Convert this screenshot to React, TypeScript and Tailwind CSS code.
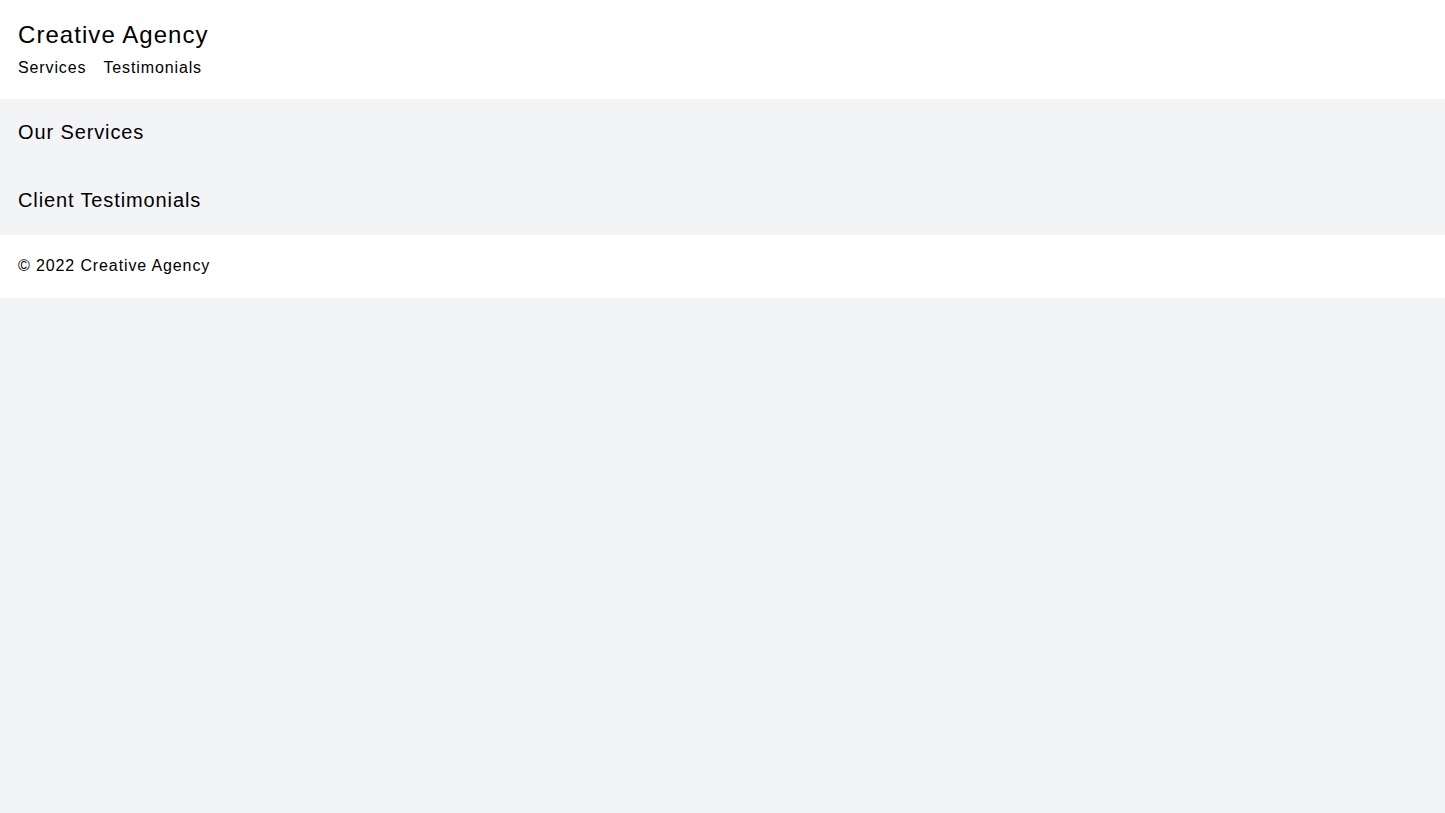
import React from "react";

const NAV_LINKS = ["Services", "Testimonials"];

const App: React.FC = () => {
  return (
    <div
      className="min-h-screen bg-gray-100 text-black tracking-[0.055em]"
      style={{ fontFamily: '"Liberation Sans", Arial, sans-serif' }}
    >
      <header className="bg-white px-[18px] pt-[19px] pb-[19px]">
        <h1 className="text-2xl tracking-[0.044em]">Creative Agency</h1>
        <nav className="mt-[5px] flex gap-[17px]">
          {NAV_LINKS.map((link) => (
            <a key={link} href={`#${link.toLowerCase()}`} className="text-base">
              {link}
            </a>
          ))}
        </nav>
      </header>

      <main>
        <section id="services" className="px-[18px] pt-[19px] pb-[21px]">
          <h2 className="text-xl">Our Services</h2>
        </section>
        <section id="testimonials" className="px-[18px] pt-[19px] pb-[21px]">
          <h2 className="text-xl">Client Testimonials</h2>
        </section>
      </main>

      <footer className="bg-white px-[18px] pt-[19px] pb-[20px]">
        <p className="text-base">© 2022 Creative Agency</p>
      </footer>
    </div>
  );
};

export default App;
